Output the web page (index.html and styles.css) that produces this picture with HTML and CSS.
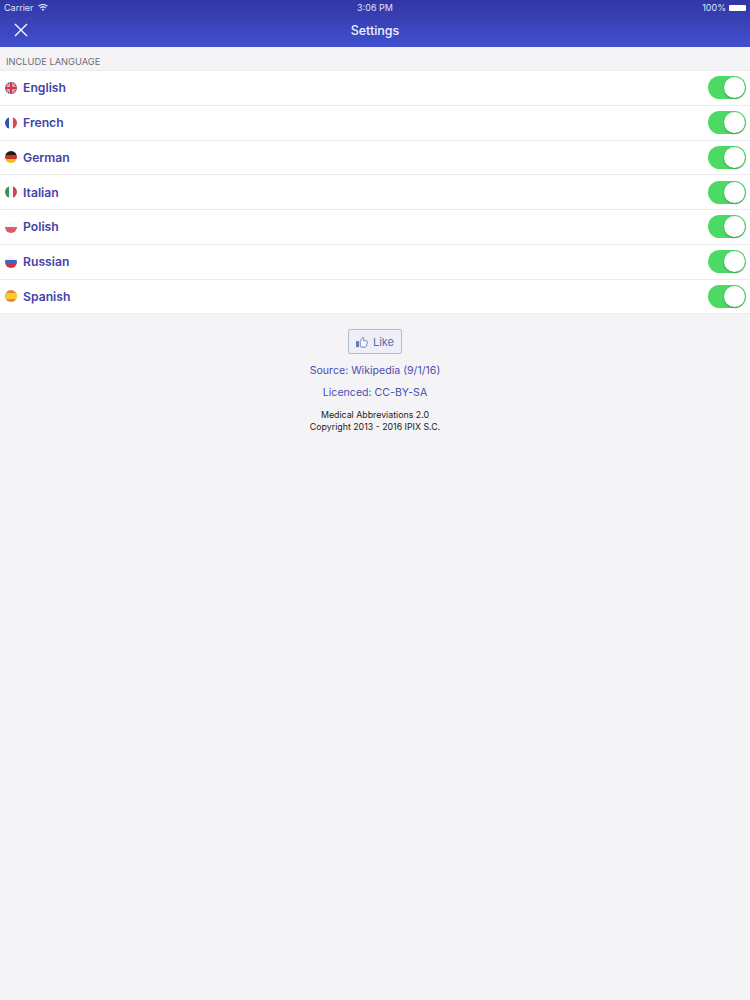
FILE: index.html

```html
<!DOCTYPE html>
<html lang="en">
<head>
  <meta charset="UTF-8">
  <meta name="viewport" content="width=device-width, initial-scale=1.0">
  <title>Settings</title>
  <link rel="stylesheet" href="styles.css">
</head>
<body>
  <header class="topbar">
    <div class="status">
      <div class="status-left">
        <span>Carrier</span>
        <svg width="10" height="7" viewBox="0 0 11 8"><path d="M5.5 8 3.9 6.2a2.3 2.3 0 0 1 3.2 0zM2.9 5.2 1.9 4.1a5.2 5.2 0 0 1 7.2 0l-1 1.1a3.7 3.7 0 0 0-5.2 0zM.9 3 0 2a8 8 0 0 1 11 0l-.9 1a6.7 6.7 0 0 0-9.2 0z" fill="#dfe3ff"/></svg>
      </div>
      <span class="status-time">3:06 PM</span>
      <div class="status-right">
        <span>100%</span>
        <span class="battery"></span>
      </div>
    </div>
    <div class="navbar">
      <svg class="close" width="14" height="14" viewBox="0 0 14 14"><path d="M1 1l12 12M13 1 1 13" stroke="#fff" stroke-width="1.3" fill="none"/></svg>
      <h1>Settings</h1>
    </div>
  </header>

  <h2 class="section-title">INCLUDE LANGUAGE</h2>

  <ul class="languages">
    <li class="lang">
      <svg class="flag" viewBox="0 0 12 12"><defs><clipPath id="c1"><circle cx="6" cy="6" r="6"/></clipPath></defs><g clip-path="url(#c1)"><rect width="12" height="12" fill="#3a3f7c"/><path d="M0 0l12 12M12 0 0 12" stroke="#e8a0ac" stroke-width="2.2"/><path d="M6 0v12M0 6h12" stroke="#f2f2f6" stroke-width="3.6"/><path d="M6 0v12M0 6h12" stroke="#d8324c" stroke-width="2.6"/></g></svg>
      <span class="lang-name">English</span>
      <span class="switch"></span>
    </li>
    <li class="lang">
      <svg class="flag" viewBox="0 0 12 12"><defs><clipPath id="c2"><circle cx="6" cy="6" r="6"/></clipPath></defs><g clip-path="url(#c2)"><rect width="4" height="12" fill="#2f55a8"/><rect x="4" width="4" height="12" fill="#f6f6f8"/><rect x="8" width="4" height="12" fill="#df4450"/></g></svg>
      <span class="lang-name">French</span>
      <span class="switch"></span>
    </li>
    <li class="lang">
      <svg class="flag" viewBox="0 0 12 12"><defs><clipPath id="c3"><circle cx="6" cy="6" r="6"/></clipPath></defs><g clip-path="url(#c3)"><rect width="12" height="4" fill="#1c1c1c"/><rect y="4" width="12" height="4" fill="#c8321e"/><rect y="8" width="12" height="4" fill="#f2bc1c"/></g></svg>
      <span class="lang-name">German</span>
      <span class="switch"></span>
    </li>
    <li class="lang">
      <svg class="flag" viewBox="0 0 12 12"><defs><clipPath id="c4"><circle cx="6" cy="6" r="6"/></clipPath></defs><g clip-path="url(#c4)"><rect width="4" height="12" fill="#2f9460"/><rect x="4" width="4" height="12" fill="#f6f6f8"/><rect x="8" width="4" height="12" fill="#cf4450"/></g></svg>
      <span class="lang-name">Italian</span>
      <span class="switch"></span>
    </li>
    <li class="lang">
      <svg class="flag" viewBox="0 0 12 12"><defs><clipPath id="c5"><circle cx="6" cy="6" r="6"/></clipPath></defs><g clip-path="url(#c5)"><rect width="12" height="6" fill="#fafafa"/><rect y="6" width="12" height="6" fill="#e4586a"/></g></svg>
      <span class="lang-name">Polish</span>
      <span class="switch"></span>
    </li>
    <li class="lang">
      <svg class="flag" viewBox="0 0 12 12"><defs><clipPath id="c6"><circle cx="6" cy="6" r="6"/></clipPath></defs><g clip-path="url(#c6)"><rect width="12" height="4" fill="#f4f4f8"/><rect y="4" width="12" height="4" fill="#3f66c0"/><rect y="8" width="12" height="4" fill="#d2343f"/></g></svg>
      <span class="lang-name">Russian</span>
      <span class="switch"></span>
    </li>
    <li class="lang">
      <svg class="flag" viewBox="0 0 12 12"><defs><clipPath id="c7"><circle cx="6" cy="6" r="6"/></clipPath></defs><g clip-path="url(#c7)"><rect width="12" height="12" fill="#e8893a"/><rect y="3" width="12" height="6" fill="#f8cc2c"/></g></svg>
      <span class="lang-name">Spanish</span>
      <span class="switch"></span>
    </li>
  </ul>

  <footer class="about">
    <button class="like">
      <svg width="14" height="12" viewBox="0 0 14 12"><rect x="0" y="5" width="3.5" height="7" fill="#6678b4"/><path d="M5 5.2 7.6.6c1.3-.4 1.9.7 1.6 1.9L8.8 4.5h3.6c1 0 1.3 1 1 1.7l-1.2 4.9c-.2.5-.6.9-1.2.9H6c-.6 0-1-.4-1-1z" fill="#f5f6fb" stroke="#6678b4" stroke-width="1"/></svg>
      Like
    </button>
    <p class="link-line">Source: Wikipedia (9/1/16)</p>
    <p class="link-line">Licenced: CC-BY-SA</p>
    <p class="copyright">Medical Abbreviations 2.0<br>Copyright 2013 - 2016 IPIX S.C.</p>
  </footer>
</body>
</html>
```

FILE: styles.css

```css
* {
  box-sizing: border-box;
}
body {
  margin: 0;
  min-height: 100vh;
  background: #f4f4f6;
  font-family: Inter, "Noto Sans", sans-serif;
}
.topbar {
  height: 47px;
  background: linear-gradient(180deg, #3236a4, #4150cf);
  color: #fff;
}
.status {
  display: grid;
  grid-template-columns: 1fr auto 1fr;
  align-items: center;
  height: 15px;
  padding: 0 4px;
  font-size: 9px;
  color: #dfe3ff;
}
.status-left {
  display: flex;
  align-items: center;
  gap: 4px;
}
.status-right {
  display: flex;
  align-items: center;
  justify-content: flex-end;
  gap: 3px;
}
.battery {
  width: 17px;
  height: 6px;
  background: #fff;
  border-radius: 1px;
}
.navbar {
  position: relative;
  display: flex;
  align-items: center;
  justify-content: center;
  height: 31px;
}
.navbar h1 {
  margin: 0;
  font-size: 12.5px;
  font-weight: 500;
  color: #eef0ff;
}
.close {
  position: absolute;
  left: 14px;
  top: 8px;
}
.section-title {
  display: flex;
  align-items: center;
  height: 23px;
  margin: 0;
  padding: 5px 0 0 6px;
  font-size: 9.3px;
  font-weight: 400;
  color: #6d6d72;
}
.languages {
  margin: 0;
  padding: 0;
  list-style: none;
  background: #fff;
  border-top: 1px solid #ececf0;
}
.lang {
  display: flex;
  align-items: center;
  height: 34.75px;
  padding: 0 4px 0 5px;
  border-bottom: 1px solid #ececf0;
}
.flag {
  width: 12px;
  height: 12px;
  margin-right: 6px;
}
.lang-name {
  font-size: 12.2px;
  font-weight: 600;
  color: #4344a6;
}
.switch {
  position: relative;
  width: 38px;
  height: 23px;
  margin-left: auto;
  background: #4cd964;
  border-radius: 12px;
}
.switch::after {
  content: "";
  position: absolute;
  right: 1px;
  top: 1px;
  width: 21px;
  height: 21px;
  background: #fff;
  border-radius: 50%;
  box-shadow: 0 1px 2px rgba(0, 0, 0, .3);
}
.about {
  display: flex;
  flex-direction: column;
  align-items: center;
  padding-top: 15px;
  text-align: center;
}
.like {
  display: flex;
  align-items: center;
  gap: 5px;
  width: 54px;
  height: 25px;
  padding: 0 7px;
  background: #eef0f8;
  border: 1px solid #b4bacf;
  border-radius: 2px;
  font-family: inherit;
  font-size: 11px;
  color: #5c68a8;
}
.link-line {
  margin: 11px 0 0;
  font-size: 10.6px;
  line-height: 12px;
  color: #4a4db0;
}
.link-line + .link-line {
  margin-top: 10px;
}
.copyright {
  margin: 10px 0 0;
  font-size: 8.8px;
  line-height: 12px;
  color: #222;
}
```
